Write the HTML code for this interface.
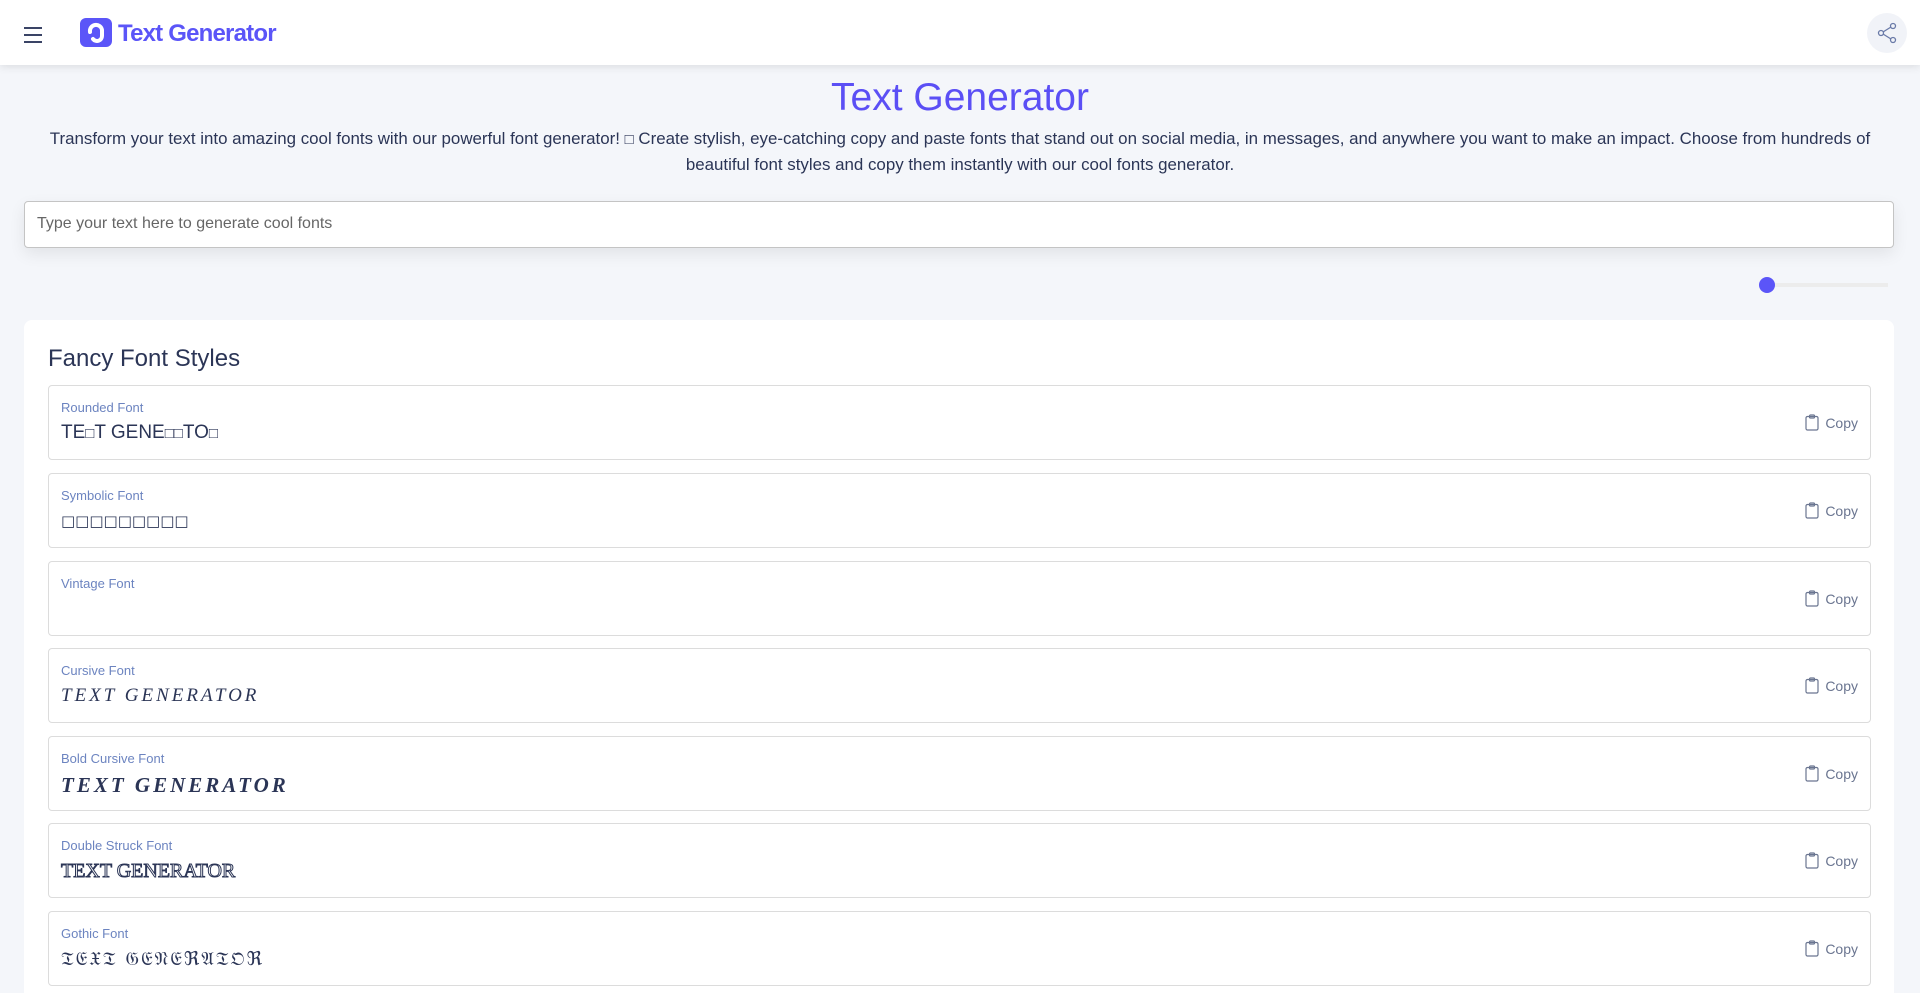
<!DOCTYPE html>
<html><head><meta charset="utf-8"><style>
*{box-sizing:border-box;margin:0;padding:0}
html{height:993px;overflow:hidden}
body{width:1920px;height:993px;overflow:hidden;background:#f4f6fa;font-family:"Liberation Sans","DejaVu Sans",sans-serif;color:#2b3556;position:relative}
.hdr{position:absolute;left:0;top:0;width:1920px;height:65px;background:#fff;box-shadow:0 2px 8px rgba(0,0,0,.1)}
.ham{position:absolute;left:24px;top:27px;width:18px}
.ham i{display:block;height:2px;background:#3a4466;margin-bottom:5px}
.logo{position:absolute;left:80px;top:18px;width:32px;height:29px;background:#5b55f8;border-radius:6px}
.logot{position:absolute;left:118px;top:20px;font-size:24px;font-weight:bold;color:#5b55f8;letter-spacing:-0.8px}
.share{position:absolute;left:1867px;top:13px;width:40px;height:40px;border-radius:50%;background:#f1f3f8}
h1{position:absolute;left:0;width:1920px;top:76px;text-align:center;font-size:39px;font-weight:normal;color:#5b4ff5}
.desc{position:absolute;left:40px;width:1840px;top:126px;text-align:center;font-size:16.9px;line-height:25px;color:#2b3556}
.inp{position:absolute;left:24px;top:201px;width:1870px;height:47px;background:#fff;border:1px solid #c4c4c4;border-radius:4px;box-shadow:0 6px 16px rgba(0,0,0,.08);font-size:16px;color:#666;padding:13px 12px}
.track{position:absolute;left:1766px;top:283px;width:122px;height:4px;background:#ececec}
.dot{position:absolute;left:1759px;top:277px;width:16px;height:16px;border-radius:50%;background:#5b55f8}
.card{position:absolute;left:24px;top:320px;width:1870px;height:673px;background:#fff;border-radius:8px 8px 0 0}
h2{position:absolute;left:48px;top:345px;font-size:24px;font-weight:normal;color:#2b3556}
.it{position:absolute;left:48px;width:1823px;height:75px;border:1px solid #dcdcdc;border-radius:4px;background:#fff}
.lb{position:absolute;left:12px;top:14px;font-size:13px;color:#6c84c0}
.vl{position:absolute;left:12px;top:36px;font-size:19px;color:#2b3556;font-family:"DejaVu Sans","Liberation Sans",sans-serif;white-space:nowrap}
.b{font-size:15px}
.cp{position:absolute;right:12px;top:28px;font-size:14px;color:#6a7590}
.cp svg{vertical-align:-3px;margin-right:6px}
</style></head><body>
<div class="hdr">
<div class="ham"><i></i><i></i><i></i></div>
<div class="logo"><svg width="32" height="29" viewBox="0 0 32 29"><path d="M10 14a6 6 0 0 1 12-2v6a5 5 0 0 1-9 3" fill="none" stroke="#fff" stroke-width="4" stroke-linecap="round"/></svg></div>
<div class="logot">Text Generator</div>
<div class="share"><svg width="40" height="40" viewBox="0 0 40 40" fill="none" stroke="#6a7aa8" stroke-width="1.3"><circle cx="14" cy="20" r="2.5"/><circle cx="26" cy="13" r="2.5"/><circle cx="26" cy="27" r="2.5"/><path d="M16 19l8-5M16 21l8 5"/></svg></div>
</div>
<h1>Text Generator</h1>
<div class="desc">Transform your text into amazing cool fonts with our powerful font generator! <span class="b">□</span> Create stylish, eye-catching copy and paste fonts that stand out on social media, in messages, and anywhere you want to make an impact. Choose from hundreds of beautiful font styles and copy them instantly with our cool fonts generator.</div>
<div class="inp">Type your text here to generate cool fonts</div>
<div class="track"></div><div class="dot"></div>
<div class="card"></div>
<h2>Fancy Font Styles</h2>

<div class="it" style="top:385px"><div class="lb">Rounded Font</div><div class="vl" style="font-family:'Liberation Sans',sans-serif">TE<span class="b">□</span>T GEΝE<span class="b">□□</span>TO<span class="b">□</span></div><div class="cp"><svg width="14" height="17" viewBox="0 0 14 17" fill="none" stroke="#6a7590" stroke-width="1.2"><rect x="1" y="2.5" width="12" height="13.5" rx="1.5"/><rect x="4.5" y="1" width="5" height="3" rx="1"/></svg>Copy</div></div>
<div class="it" style="top:473px"><div class="lb">Symbolic Font</div><div class="vl" style="font-size:15px;top:38px">□□□□□□□□□</div><div class="cp"><svg width="14" height="17" viewBox="0 0 14 17" fill="none" stroke="#6a7590" stroke-width="1.2"><rect x="1" y="2.5" width="12" height="13.5" rx="1.5"/><rect x="4.5" y="1" width="5" height="3" rx="1"/></svg>Copy</div></div>
<div class="it" style="top:561px"><div class="lb">Vintage Font</div><div class="vl"></div><div class="cp"><svg width="14" height="17" viewBox="0 0 14 17" fill="none" stroke="#6a7590" stroke-width="1.2"><rect x="1" y="2.5" width="12" height="13.5" rx="1.5"/><rect x="4.5" y="1" width="5" height="3" rx="1"/></svg>Copy</div></div>
<div class="it" style="top:648px"><div class="lb">Cursive Font</div><div class="vl" style="font-family:'Liberation Serif',serif;font-style:italic;letter-spacing:3px">TEXT GENERATOR</div><div class="cp"><svg width="14" height="17" viewBox="0 0 14 17" fill="none" stroke="#6a7590" stroke-width="1.2"><rect x="1" y="2.5" width="12" height="13.5" rx="1.5"/><rect x="4.5" y="1" width="5" height="3" rx="1"/></svg>Copy</div></div>
<div class="it" style="top:736px"><div class="lb">Bold Cursive Font</div><div class="vl" style="font-family:'Liberation Serif',serif;font-style:italic;font-weight:bold;font-size:21px;letter-spacing:3px">TEXT GENERATOR</div><div class="cp"><svg width="14" height="17" viewBox="0 0 14 17" fill="none" stroke="#6a7590" stroke-width="1.2"><rect x="1" y="2.5" width="12" height="13.5" rx="1.5"/><rect x="4.5" y="1" width="5" height="3" rx="1"/></svg>Copy</div></div>
<div class="it" style="top:823px"><div class="lb">Double Struck Font</div><div class="vl" style="font-family:'Liberation Serif',serif;color:#fff;-webkit-text-stroke:1px #2b3556;font-size:20px">TEXT GENERATOR</div><div class="cp"><svg width="14" height="17" viewBox="0 0 14 17" fill="none" stroke="#6a7590" stroke-width="1.2"><rect x="1" y="2.5" width="12" height="13.5" rx="1.5"/><rect x="4.5" y="1" width="5" height="3" rx="1"/></svg>Copy</div></div>
<div class="it" style="top:911px"><div class="lb">Gothic Font</div><div class="vl" style="letter-spacing:2px">𝔗𝔈𝔛𝔗 𝔊𝔈𝔑𝔈ℜ𝔄𝔗𝔒ℜ</div><div class="cp"><svg width="14" height="17" viewBox="0 0 14 17" fill="none" stroke="#6a7590" stroke-width="1.2"><rect x="1" y="2.5" width="12" height="13.5" rx="1.5"/><rect x="4.5" y="1" width="5" height="3" rx="1"/></svg>Copy</div></div>
</body></html>
